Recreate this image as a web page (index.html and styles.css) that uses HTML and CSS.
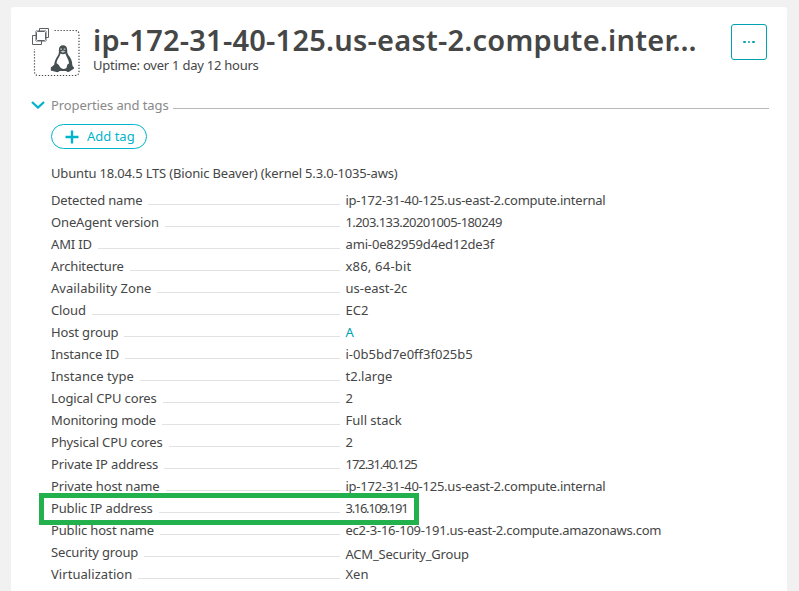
FILE: index.html
```
<!DOCTYPE html>
<html lang="en">
<head>
<meta charset="utf-8">
<title>Host details</title>
<link rel="stylesheet" href="styles.css">
</head>
<body>
<main class="card">
  <header class="header">
    <svg class="host-icon" width="50" height="50" viewBox="0 0 50 50" fill="none">
      <path d="M22.500 3.500H43q4 0 4 4v37q0 4-4 4H6.500q-4 0-4-4V22" stroke="#454646" stroke-width="1.200" stroke-dasharray="1.300 1.700"/>
      <g stroke="#5d6163" stroke-width="1">
        <path d="M7.500 4.500V1.500h9v9h-3M4.500 8.500h-4v9h9v-4"/>
        <rect x="4.500" y="4.500" width="9" height="9" rx="1" fill="#fff"/>
        <path d="M4.500 3.500h9M4.500 14.500h9M3.500 4.500v9M14.500 4.500v9" stroke-dasharray="1 1"/>
      </g>
      <path fill="#454f52" d="M31 18.300c-2.600 0-4.200 1.800-4.100 4.500.1 2.700.1 4.200-1.300 6.200-1.800 2.600-3.300 5.500-3.400 8.800-1.300.4-1.100 1.500-2.500 1.900-1.400.3-.6 1.500-.9 2.800-.4 1.700 2 1.400 4.700 2.300 2 .7 3.400.2 4-.8h6.800c.7 1.500 2.800 1.200 4-.1 1.200-1.200 3.800-1.900 3.800-3 0-.9-1.700-1.200-1.800-3.200 0-4-1.600-6.700-3.800-9.500-1.500-2-1.200-3.300-1.300-5.500-.1-2.800-1.600-4.400-4.200-4.400z"/>
      <path fill="#fff" d="M28.500 26.500q2.500 1.500 4.900 0c.7 3 3.500 6 3.700 10-2.300.5-1.900 2.500-2.600 4.500q-3.500 2-6.200-.4c-.8-2-2.100-3.500-3.700-4.300 0-3.700 3.200-6.200 3.900-9.800z"/>
      <path fill="#c9cdce" d="M28.300 21.400h1.600v1.300h-1.600zm3.400 0h1.700v1.300h-1.700zM28.500 24.500l2.500-1 2.400 1-2.400 1.200z"/>
    </svg>
    <div class="heading">
      <h1>ip-172-31-40-125.us-east-2.compute.inter…</h1>
      <p>Uptime: over 1 day 12 hours</p>
    </div>
    <button class="more" aria-label="More"><i></i><i></i><i></i></button>
  </header>
  <section>
    <div class="section-title">
      <svg width="14" height="8" viewBox="0 0 14 8"><path d="M1 1l6 5.500L13 1" fill="none" stroke="#00b4cc" stroke-width="2.300"/></svg>
      <h2>Properties and tags</h2><span class="rule"></span>
    </div>
    <div class="content">
      <button class="add-tag"><svg width="14" height="14" viewBox="0 0 14 14"><path d="M7 .5v13M.5 7h13" stroke="#00b4cc" stroke-width="2.400"/></svg><span>Add tag</span></button>
      <p class="os">Ubuntu 18.04.5 LTS (Bionic Beaver) (kernel 5.3.0-1035-aws)</p>
      <dl>
        <div class="row"><dt>Detected name</dt><dd class="host">ip-172-31-40-125.us-east-2.compute.internal</dd></div>
        <div class="row"><dt>OneAgent version</dt><dd class="version">1.203.133.20201005-180249</dd></div>
        <div class="row"><dt>AMI ID</dt><dd class="id">ami-0e82959d4ed12de3f</dd></div>
        <div class="row"><dt>Architecture</dt><dd class="wide">x86, 64-bit</dd></div>
        <div class="row"><dt class="loose">Availability Zone</dt><dd>us-east-2c</dd></div>
        <div class="row"><dt>Cloud</dt><dd>EC2</dd></div>
        <div class="row"><dt>Host group</dt><dd class="link">A</dd></div>
        <div class="row"><dt>Instance ID</dt><dd>i-0b5bd7e0ff3f025b5</dd></div>
        <div class="row"><dt class="loose">Instance type</dt><dd>t2.large</dd></div>
        <div class="row"><dt>Logical CPU cores</dt><dd>2</dd></div>
        <div class="row"><dt>Monitoring mode</dt><dd>Full stack</dd></div>
        <div class="row"><dt>Physical CPU cores</dt><dd>2</dd></div>
        <div class="row"><dt>Private IP address</dt><dd class="address">172.31.40.125</dd></div>
        <div class="row"><dt>Private host name</dt><dd class="host">ip-172-31-40-125.us-east-2.compute.internal</dd></div>
        <div class="row marked"><dt>Public IP address</dt><dd class="address public">3.16.109.191</dd></div>
        <div class="row"><dt>Public host name</dt><dd class="host">ec2-3-16-109-191.us-east-2.compute.amazonaws.com</dd></div>
        <div class="row"><dt>Security group</dt><dd class="group">ACM_Security_Group</dd></div>
        <div class="row"><dt class="loose">Virtualization</dt><dd>Xen</dd></div>
      </dl>
    </div>
  </section>
</main>
</body>
</html>
```
FILE: styles.css
```
*, *::before, *::after { box-sizing: border-box; }
html { overflow: hidden; }
body { margin: 0; padding: 7px 12px 0 11px; height: 591px; overflow: hidden; background: #f1f1f1; color: #454646; font: 13px/22px "Noto Sans", sans-serif; }
h1, h2, p, dl, dt, dd { margin: 0; }
button { background: #fff; font: inherit; padding: 0; color: #00a1b2; }
.card { height: 600px; padding: 17px 18px 0 20px; background: #fff; border-radius: 3px 3px 0 0; }
.header { display: flex; height: 70px; }
.host-icon { margin: 3px 0 0 1px; flex: none; }
.heading { margin-left: 11px; width: 610px; }
h1 { white-space: nowrap; font-size: 29px; font-weight: 600; line-height: 32px; margin-bottom: 1px; letter-spacing: .23px; }
.heading p { line-height: 16px; letter-spacing: -.24px; }
.more { display: flex; justify-content: center; align-items: center; gap: 2px; width: 36px; height: 36px; margin-left: auto; margin-right: 2px; border: 1px solid #00a1b2; border-radius: 3px; }
.more i { width: 2.500px; height: 2.500px; background: #00a1b2; border-radius: 1px; }
.section-title { display: flex; align-items: center; height: 22px; color: #898989; }
h2 { margin: 0 4px 0 6px; font-size: 13px; font-weight: 400; letter-spacing: -.1px; }
.rule { flex: 1; height: 1px; margin-top: 6px; background: #b8b8b8; }
.content { padding-left: 20px; }
.add-tag { display: flex; align-items: center; gap: 8px; width: 96px; height: 25px; margin-top: 8px; padding: 0 0 1px 13px; border: 1px solid #00b4cc; border-radius: 13px; color: #00b4cc; }
.add-tag svg { margin-top: 2px; }
.os { margin-top: 13px; white-space: nowrap; letter-spacing: -.17px; }
.content dl { margin-top: 5px; }
.row { position: relative; display: flex; height: 22px; white-space: nowrap; }
dt { display: flex; width: 289px; margin-right: 5.500px; letter-spacing: -.14px; }
dt::after { content: ""; flex: 1; height: 1px; margin: 15px 0 0 6px; background: #e2e2e2; }
.loose { letter-spacing: .05px; }
.host { letter-spacing: -.24px; }
.version { letter-spacing: -.58px; }
.id { letter-spacing: -.15px; }
.wide { letter-spacing: .2px; }
.address { letter-spacing: -1.050px; }
.public { letter-spacing: -1.300px; }
.link { color: #00a1b2; }
.group { padding-top: 2px; letter-spacing: -.2px; }
.marked::after { content: ""; position: absolute; z-index: 1; top: -4px; left: -12px; width: 380px; height: 32px; border: 5px solid #22b14c; }
```
